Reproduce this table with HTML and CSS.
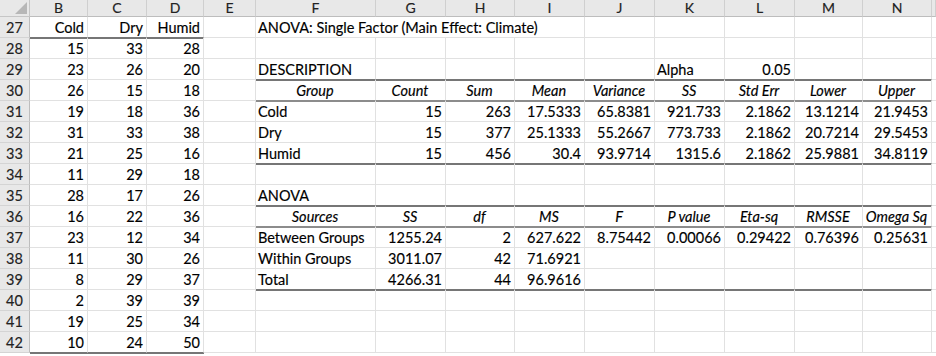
FILE: index.html
```html
<!DOCTYPE html>
<html>
<head>
<meta charset="utf-8">
<link rel="stylesheet" href="styles.css">
</head>
<body>
<div class="sheet">
  <div class="corner"><span class="tri"></span></div>
  <div class="ch">B</div><div class="ch">C</div><div class="ch">D</div><div class="ch">E</div><div class="ch">F</div><div class="ch">G</div><div class="ch">H</div><div class="ch">I</div><div class="ch">J</div><div class="ch">K</div><div class="ch">L</div><div class="ch">M</div><div class="ch">N</div><div class="ch"></div>

  <div class="rh">27</div>
  <div class="c r hb">Cold</div><div class="c r hb">Dry</div><div class="c r hb">Humid</div><div class="c"></div>
  <div class="c span4">ANOVA: Single Factor (Main Effect: Climate)</div><div class="c"></div><div class="c"></div><div class="c"></div><div class="c"></div><div class="c"></div><div class="c"></div>

  <div class="rh">28</div>
  <div class="c r">15</div><div class="c r">33</div><div class="c r">28</div><div class="c"></div>
  <div class="c"></div><div class="c"></div><div class="c"></div><div class="c"></div><div class="c"></div><div class="c"></div><div class="c"></div><div class="c"></div><div class="c"></div><div class="c"></div>

  <div class="rh">29</div>
  <div class="c r">23</div><div class="c r">26</div><div class="c r">20</div><div class="c"></div>
  <div class="c hb">DESCRIPTION</div><div class="c hb"></div><div class="c hb"></div><div class="c hb"></div><div class="c hb"></div><div class="c hb">Alpha</div><div class="c r hb">0.05</div><div class="c hb"></div><div class="c hb"></div><div class="c"></div>

  <div class="rh">30</div>
  <div class="c r">26</div><div class="c r">15</div><div class="c r">18</div><div class="c"></div>
  <div class="c h tb">Group</div><div class="c h tb">Count</div><div class="c h tb">Sum</div><div class="c h tb">Mean</div><div class="c h tb">Variance</div><div class="c h tb">SS</div><div class="c h tb">Std Err</div><div class="c h tb">Lower</div><div class="c h tb">Upper</div><div class="c"></div>

  <div class="rh">31</div>
  <div class="c r">19</div><div class="c r">18</div><div class="c r">36</div><div class="c"></div>
  <div class="c">Cold</div><div class="c r">15</div><div class="c r">263</div><div class="c r">17.5333</div><div class="c r">65.8381</div><div class="c r">921.733</div><div class="c r">2.1862</div><div class="c r">13.1214</div><div class="c r">21.9453</div><div class="c"></div>

  <div class="rh">32</div>
  <div class="c r">31</div><div class="c r">33</div><div class="c r">38</div><div class="c"></div>
  <div class="c">Dry</div><div class="c r">15</div><div class="c r">377</div><div class="c r">25.1333</div><div class="c r">55.2667</div><div class="c r">773.733</div><div class="c r">2.1862</div><div class="c r">20.7214</div><div class="c r">29.5453</div><div class="c"></div>

  <div class="rh">33</div>
  <div class="c r">21</div><div class="c r">25</div><div class="c r">16</div><div class="c"></div>
  <div class="c hb">Humid</div><div class="c r hb">15</div><div class="c r hb">456</div><div class="c r hb">30.4</div><div class="c r hb">93.9714</div><div class="c r hb">1315.6</div><div class="c r hb">2.1862</div><div class="c r hb">25.9881</div><div class="c r hb">34.8119</div><div class="c"></div>

  <div class="rh">34</div>
  <div class="c r">11</div><div class="c r">29</div><div class="c r">18</div><div class="c"></div>
  <div class="c"></div><div class="c"></div><div class="c"></div><div class="c"></div><div class="c"></div><div class="c"></div><div class="c"></div><div class="c"></div><div class="c"></div><div class="c"></div>

  <div class="rh">35</div>
  <div class="c r">28</div><div class="c r">17</div><div class="c r">26</div><div class="c"></div>
  <div class="c hb">ANOVA</div><div class="c hb"></div><div class="c hb"></div><div class="c hb"></div><div class="c hb"></div><div class="c hb"></div><div class="c hb"></div><div class="c hb"></div><div class="c hb"></div><div class="c"></div>

  <div class="rh">36</div>
  <div class="c r">16</div><div class="c r">22</div><div class="c r">36</div><div class="c"></div>
  <div class="c h tb">Sources</div><div class="c h tb">SS</div><div class="c h tb">df</div><div class="c h tb">MS</div><div class="c h tb">F</div><div class="c h tb">P value</div><div class="c h tb">Eta-sq</div><div class="c h tb">RMSSE</div><div class="c h tb">Omega Sq</div><div class="c"></div>

  <div class="rh">37</div>
  <div class="c r">23</div><div class="c r">12</div><div class="c r">34</div><div class="c"></div>
  <div class="c">Between Groups</div><div class="c r">1255.24</div><div class="c r">2</div><div class="c r">627.622</div><div class="c r">8.75442</div><div class="c r">0.00066</div><div class="c r">0.29422</div><div class="c r">0.76396</div><div class="c r">0.25631</div><div class="c"></div>

  <div class="rh">38</div>
  <div class="c r">11</div><div class="c r">30</div><div class="c r">26</div><div class="c"></div>
  <div class="c">Within Groups</div><div class="c r">3011.07</div><div class="c r">42</div><div class="c r">71.6921</div><div class="c"></div><div class="c"></div><div class="c"></div><div class="c"></div><div class="c"></div><div class="c"></div>

  <div class="rh">39</div>
  <div class="c r">8</div><div class="c r">29</div><div class="c r">37</div><div class="c"></div>
  <div class="c hb">Total</div><div class="c r hb">4266.31</div><div class="c r hb">44</div><div class="c r hb">96.9616</div><div class="c hb"></div><div class="c hb"></div><div class="c hb"></div><div class="c hb"></div><div class="c hb"></div><div class="c"></div>

  <div class="rh">40</div>
  <div class="c r">2</div><div class="c r">39</div><div class="c r">39</div><div class="c"></div>
  <div class="c"></div><div class="c"></div><div class="c"></div><div class="c"></div><div class="c"></div><div class="c"></div><div class="c"></div><div class="c"></div><div class="c"></div><div class="c"></div>

  <div class="rh">41</div>
  <div class="c r">19</div><div class="c r">25</div><div class="c r">34</div><div class="c"></div>
  <div class="c"></div><div class="c"></div><div class="c"></div><div class="c"></div><div class="c"></div><div class="c"></div><div class="c"></div><div class="c"></div><div class="c"></div><div class="c"></div>

  <div class="rh">42</div>
  <div class="c r hb">10</div><div class="c r hb">24</div><div class="c r hb">50</div><div class="c"></div>
  <div class="c"></div><div class="c"></div><div class="c"></div><div class="c"></div><div class="c"></div><div class="c"></div><div class="c"></div><div class="c"></div><div class="c"></div><div class="c"></div>
</div>
</body>
</html>
```

FILE: styles.css
```css
html, body {
  margin: 0;
  padding: 0;
  background: #ffffff;
}
body {
  width: 936px;
  height: 356px;
  overflow: hidden;
  font-family: Lato, "Liberation Sans", sans-serif;
  font-size: 14.5px;
  color: #000;
  -webkit-text-stroke: 0.15px #000;
}
.sheet {
  display: grid;
  grid-template-columns: 30px 58px 59px 57px 52px 120px 70px 69px 70px 70px 70px 70px 68px 69px 4px;
  grid-template-rows: 17px repeat(16, 21px);
  width: 936px;
}
.sheet > div {
  box-sizing: border-box;
  white-space: nowrap;
}
.corner {
  background: #e8e8e8;
  border-right: 1px solid #c6c6c6;
  border-bottom: 1px solid #c6c6c6;
  position: relative;
}
.tri {
  position: absolute;
  right: 2px;
  bottom: 2px;
  width: 0;
  height: 0;
  border-left: 12px solid transparent;
  border-bottom: 12px solid #b7b7b7;
}
.ch {
  background: #e8e8e8;
  border-right: 1px solid #cfcfcf;
  border-bottom: 1px solid #bdbdbd;
  text-align: center;
  font-size: 14px;
  line-height: 16px;
  color: #222;
  -webkit-text-stroke: 0.15px #222;
}
.rh {
  background: #e8e8e8;
  border-right: 1px solid #bdbdbd;
  border-bottom: 1px solid #d4d4d4;
  text-align: center;
  line-height: 17px;
  padding-top: 2px;
  color: #222;
  -webkit-text-stroke: 0.15px #222;
}
.c {
  border-right: 1px solid #e1e1e1;
  border-bottom: 1px solid #e1e1e1;
  line-height: 17px;
  padding: 2px 3px 0 2px;
}
.span4 {
  grid-column: span 4;
}
.r {
  text-align: right;
}
.h {
  font-style: italic;
  text-align: center;
}
.hb {
  border-bottom: 1px solid #767676;
  box-shadow: 0 1px 0 #767676;
}
.tb {
  border-bottom: 1px solid #8c8c8c;
  box-shadow: 0 1px 0 #8c8c8c;
}
```
